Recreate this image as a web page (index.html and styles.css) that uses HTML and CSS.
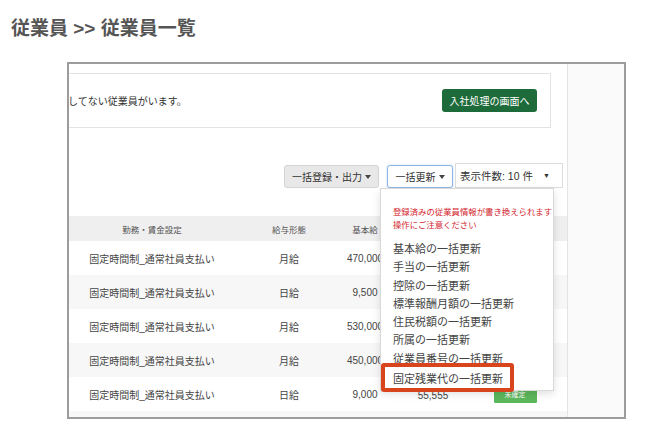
FILE: index.html
```html
<!DOCTYPE html>
<html lang="ja">
<head>
<meta charset="utf-8">
<title>従業員一覧</title>
<link rel="stylesheet" href="styles.css">
</head>
<body>
<h1 class="title">従業員 &gt;&gt; 従業員一覧</h1>
<div class="shot">
  <div class="main">
    <div class="alert">
      <span class="alert-text">してない従業員がいます。</span>
      <span class="btn-green">入社処理の画面へ</span>
    </div>
    <div class="toolbar">
      <span class="btn btn-gray">一括登録・出力<i class="caret"></i></span>
      <div class="dd">
        <span class="btn btn-focus">一括更新<i class="caret"></i></span>
        <div class="menu">
          <p class="warn">登録済みの従業員情報が書き換えられます<br>操作にご注意ください</p>
          <ul class="items">
            <li>基本給の一括更新</li>
            <li>手当の一括更新</li>
            <li>控除の一括更新</li>
            <li>標準報酬月額の一括更新</li>
            <li>住民税額の一括更新</li>
            <li>所属の一括更新</li>
            <li>従業員番号の一括更新</li>
            <li class="hl">固定残業代の一括更新</li>
          </ul>
        </div>
      </div>
      <span class="select">表示件数: 10 件<i class="sel-caret">▼</i></span>
    </div>
    <table class="grid">
      <colgroup>
        <col class="c1"><col class="c2"><col class="c3"><col class="c4"><col class="c5"><col>
      </colgroup>
      <thead>
        <tr><th>勤務・賃金設定</th><th>給与形態</th><th>基本給</th><th></th><th></th><th></th></tr>
      </thead>
      <tbody>
        <tr><td>固定時間制_通常社員支払い</td><td>月給</td><td>470,000</td><td></td><td></td><td></td></tr>
        <tr><td>固定時間制_通常社員支払い</td><td>日給</td><td>9,500</td><td></td><td></td><td></td></tr>
        <tr><td>固定時間制_通常社員支払い</td><td>月給</td><td>530,000</td><td></td><td></td><td></td></tr>
        <tr><td>固定時間制_通常社員支払い</td><td>月給</td><td>450,000</td><td></td><td></td><td></td></tr>
        <tr><td>固定時間制_通常社員支払い</td><td>日給</td><td>9,000</td><td class="low">55,555</td><td class="low"><span class="badge">未確定</span></td><td></td></tr>
        <tr class="cut"><td></td><td></td><td></td><td></td><td></td><td></td></tr>
      </tbody>
    </table>
  </div>
  <div class="side"></div>
</div>
</body>
</html>
```
FILE: styles.css
```css
* { box-sizing: border-box; }
html, body { margin: 0; padding: 0; background: #fff; }
body {
  font-family: "Liberation Sans", "Noto Sans CJK JP", sans-serif;
  color: #333;
  width: 653px;
  height: 442px;
  overflow: hidden;
}
.title {
  margin: 0;
  padding: 17px 0 0 11px;
  font-family: "Liberation Sans", "Noto Sans CJK JP", sans-serif;
  font-size: 19px;
  line-height: 24px;
  font-weight: 700;
  color: #555;
}
.shot {
  margin: 21px 0 0 67px;
  width: 559px;
  height: 357px;
  border: 2px solid #9c9c9c;
  display: flex;
  overflow: hidden;
  background: #fff;
}
.main {
  flex: 1;
  min-width: 0;
  padding-top: 9px;
}
.side {
  width: 57px;
  background: #fafafa;
  border-left: 1px solid #e4e4e4;
}
.alert {
  height: 55px;
  margin-right: 16px;
  border: 1px solid #e3e3e3;
  border-left: none;
  display: flex;
  align-items: center;
  justify-content: space-between;
  padding-right: 13px;
}
.alert-text {
  font-size: 10px;
  color: #333;
  margin-left: -1px;
}
.btn-green {
  display: inline-flex;
  align-items: center;
  justify-content: center;
  width: 95px;
  height: 23px;
  background: #1d6b3a;
  color: #fff;
  font-size: 10px;
  border-radius: 3px;
}
.toolbar {
  margin-top: 35px;
  margin-right: 4px;
  display: flex;
  justify-content: flex-end;
  align-items: flex-end;
  height: 25px;
}
.btn {
  display: inline-flex;
  align-items: center;
  justify-content: center;
  height: 23px;
  font-size: 10px;
  color: #333;
  border-radius: 3px;
  gap: 3px;
}
.btn-gray {
  width: 95px;
  background: #e8e8e8;
  border: 1px solid #d4d4d4;
  margin-right: 8px;
}
.btn-focus {
  width: 66px;
  background: #fff;
  border: 1px solid #8fb7e6;
  box-shadow: 0 0 2px rgba(102, 175, 233, 0.5);
}
.caret {
  display: inline-block;
  width: 0;
  height: 0;
  border-top: 4px solid #444;
  border-left: 3px solid transparent;
  border-right: 3px solid transparent;
}
.dd {
  position: relative;
  margin-right: 2px;
}
.menu {
  position: absolute;
  top: 100%;
  left: -7px;
  width: 174px;
  height: 203px;
  background: #fff;
  border: 1px solid #d9d9d9;
  box-shadow: 0 3px 8px rgba(0, 0, 0, 0.12);
  padding: 16px 0 0 12px;
  z-index: 5;
}
.warn {
  margin: 0;
  font-size: 8.4px;
  line-height: 12.5px;
  color: #d3262e;
  font-family: "Noto Sans CJK JP", sans-serif;
  white-space: nowrap;
}
.items {
  list-style: none;
  margin: 9px 0 0;
  padding: 0;
}
.items li {
  font-size: 11px;
  line-height: 18.3px;
  color: #444;
  font-family: "Noto Sans CJK JP", sans-serif;
  white-space: nowrap;
}
.items li.hl {
  display: inline-block;
  position: relative;
  margin: -4px 0 0 -12px;
  padding: 2px 7px 1px 8px;
  line-height: 18px;
  border: 4px solid #d8451d;
  border-radius: 3px;
  background: #fff;
}
.select {
  width: 108px;
  height: 25px;
  border: 1px solid #dcdcdc;
  background: #fff;
  font-size: 10.5px;
  display: flex;
  align-items: center;
  padding-left: 4px;
  color: #333;
}
.sel-caret {
  font-style: normal;
  font-size: 7px;
  margin-left: auto;
  margin-right: 12px;
}
.grid {
  margin-top: 28px;
  width: 100%;
  border-collapse: collapse;
  table-layout: fixed;
}
.c1 { width: 166px; }
.c2 { width: 108px; }
.c3 { width: 44px; }
.c4 { width: 92px; }
.c5 { width: 72px; }
.grid th {
  height: 25px;
  background: #efefef;
  font-size: 8.5px;
  font-weight: 400;
  color: #555;
  text-align: center;
  padding: 0;
  white-space: nowrap;
  font-family: "Noto Sans CJK JP", sans-serif;
}
.grid td {
  height: 34px;
  font-size: 10px;
  color: #444;
  text-align: center;
  padding: 0;
  white-space: nowrap;
}
.grid td.low { padding-top: 2px; }
.grid tbody tr:nth-child(even) td { background: #f7f7f7; }
.badge {
  display: inline-block;
  width: 43px;
  height: 16px;
  line-height: 16px;
  background: #5cb85c;
  color: #fff;
  font-size: 7px;
  border-radius: 1px;
  vertical-align: middle;
}
```
